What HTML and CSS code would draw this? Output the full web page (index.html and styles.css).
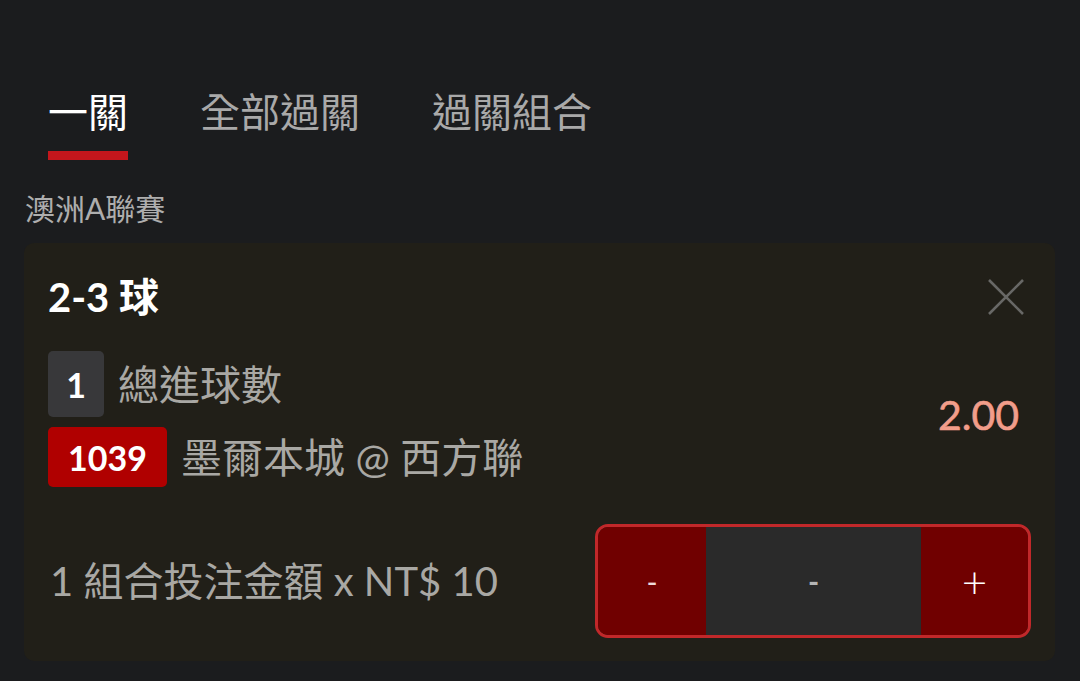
FILE: index.html
```html
<!DOCTYPE html>
<html lang="zh-Hant">
<head>
    <meta charset="UTF-8">
    <meta name="viewport" content="width=device-width, initial-scale=1.0">
    <title>投注單</title>
    <link rel="stylesheet" href="styles.css">
</head>
<body>
    <div class="tabs">
        <div class="tab active">一關<div class="tabLine"></div></div>
        <div class="tab">全部過關</div>
        <div class="tab">過關組合</div>
    </div>
    <div class="league">澳洲A聯賽</div>
    <div class="card">
        <div class="titleRow">
            <span class="title">2-3 球</span>
            <svg class="closeBtn" width="36" height="36" viewBox="0 0 36 36">
                <path d="M1 1 L35 35 M35 1 L1 35" stroke="#686866" stroke-width="2.6" fill="none"/>
            </svg>
        </div>
        <div class="pickRow">
            <div class="pickInfo">
                <div class="line">
                    <span class="badge grey">1</span>
                    <span class="lineTxt">總進球數</span>
                </div>
                <div class="line">
                    <span class="badge red">1039</span>
                    <span class="lineTxt">墨爾本城 @ 西方聯</span>
                </div>
            </div>
            <div class="odds">2.00</div>
        </div>
        <div class="stakeRow">
            <span class="stakeTxt">1 組合投注金額 x NT$ 10</span>
            <div class="stepper">
                <button class="stepBtn minus">-</button>
                <div class="stepVal">-</div>
                <button class="stepBtn plus">+</button>
            </div>
        </div>
    </div>
</body>
</html>
```

FILE: styles.css
```css
body{
    margin: 0;
    background: #1b1c1e;
    font-family: "Lato", "Noto Sans CJK TC", sans-serif;
    color: #a9a8a4;
}
.tabs{
    display: flex;
    gap: 72px;
    padding: 92px 0 0 48px;
}
.tab{
    font-size: 40px;
    line-height: 40px;
    color: #a9a9a9;
}
.tab.active{
    color: #ffffff;
}
.tabLine{
    height: 9px;
    margin-top: 19px;
    background: #c4161c;
}
.league{
    margin: 33px 0 0 25px;
    font-size: 30px;
    line-height: 30px;
    color: #aeaeae;
}
.card{
    margin: 20px 25px 0 24px;
    padding: 36px 24px 23px 24px;
    background: #211f18;
    border-radius: 10px;
}
.titleRow{
    display: flex;
    justify-content: space-between;
    align-items: center;
    height: 36px;
}
.title{
    font-size: 40px;
    line-height: 36px;
    font-weight: bold;
    color: #ffffff;
}
.closeBtn{
    margin-right: 7px;
}
.pickRow{
    display: flex;
    justify-content: space-between;
    align-items: center;
    margin-top: 36px;
}
.line{
    display: flex;
    align-items: center;
    gap: 14px;
}
.line + .line{
    margin-top: 10px;
}
.badge{
    display: flex;
    align-items: center;
    justify-content: center;
    font-size: 34px;
    font-weight: bold;
    color: #ffffff;
    border-radius: 5px;
}
.badge.grey{
    width: 56px;
    height: 66px;
    background: #38383a;
}
.badge.red{
    width: 119px;
    height: 60px;
    background: #b00000;
}
.lineTxt{
    font-size: 41px;
    line-height: 41px;
}
.odds{
    margin: 0 12px 10px 0;
    font-size: 41px;
    line-height: 41px;
    color: #f29d8a;
    -webkit-text-stroke: 0.6px #f29d8a;
}
.stakeRow{
    display: flex;
    justify-content: space-between;
    align-items: center;
    margin-top: 37px;
}
.stakeTxt{
    padding-left: 2px;
    font-size: 40px;
    line-height: 40px;
}
.stepper{
    display: flex;
    box-sizing: border-box;
    width: 436px;
    height: 114px;
    border: 3px solid #c1282a;
    border-radius: 13px;
    overflow: hidden;
}
.stepBtn{
    width: 108px;
    border: none;
    background: #700000;
    color: #eedada;
    font-family: "Lato", sans-serif;
    font-size: 30px;
    padding: 0;
}
.stepBtn.plus{
    width: 107px;
    color: #ffffff;
    font-size: 44px;
    font-weight: 300;
}
.stepVal{
    flex: 1;
    display: flex;
    align-items: center;
    justify-content: center;
    background: #2a2a2a;
    color: #b5b5b5;
    font-size: 30px;
    font-weight: bold;
}
```
